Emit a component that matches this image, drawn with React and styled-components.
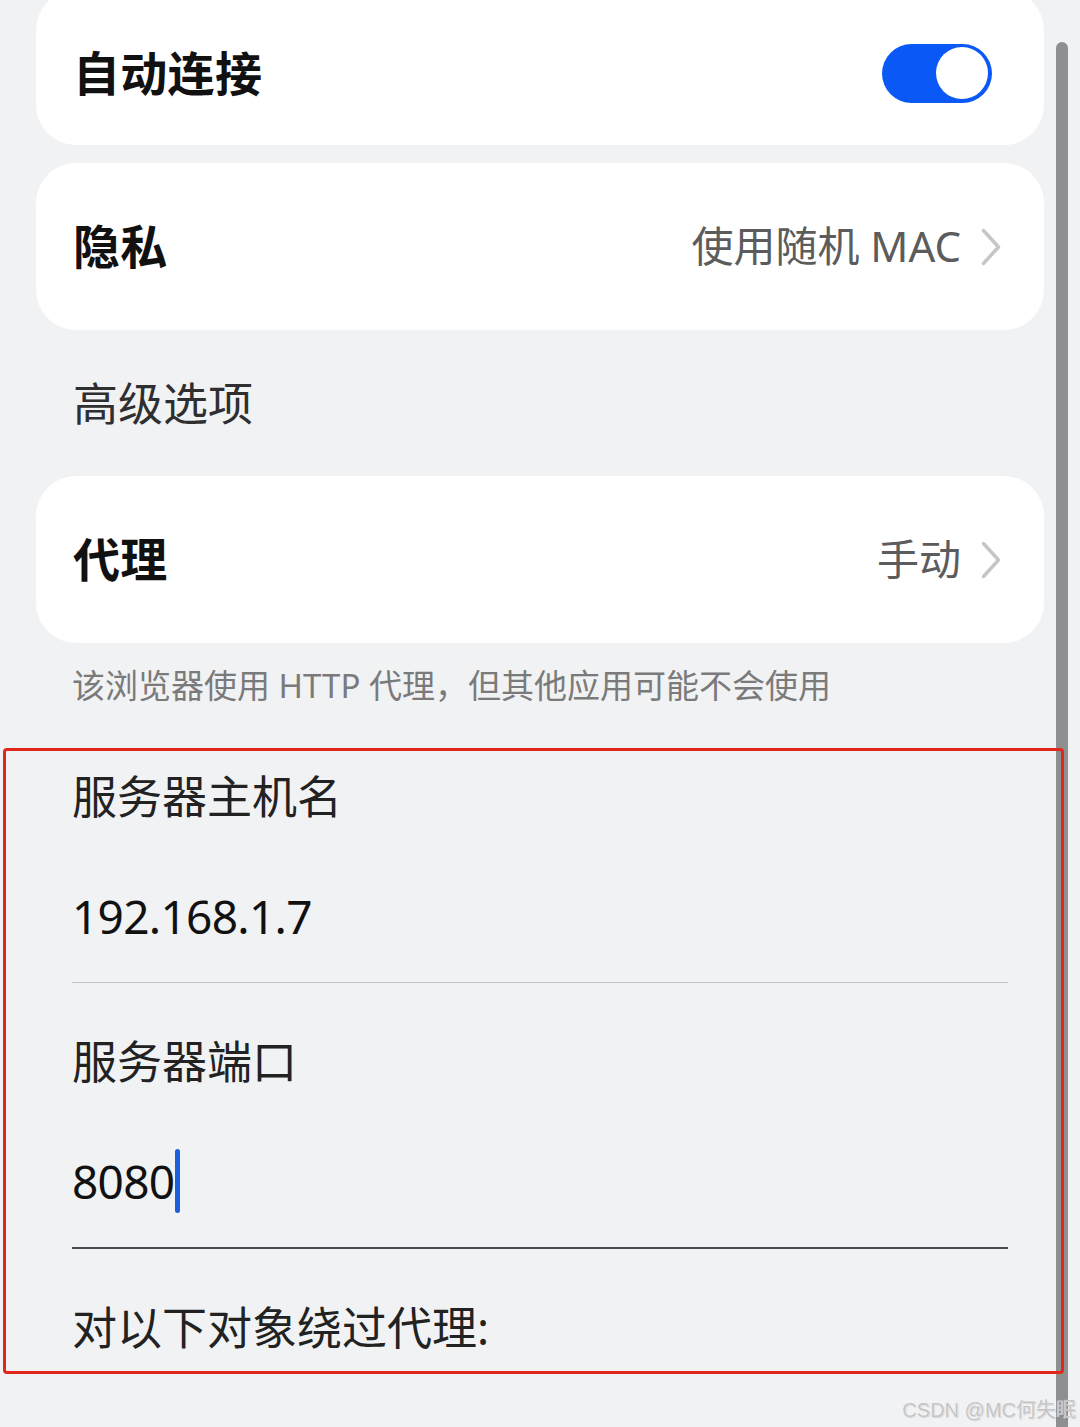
import React from "react";
import styled, { createGlobalStyle } from "styled-components";

const Global = createGlobalStyle`
  html, body {
    margin: 0;
    padding: 0;
    background: #f1f2f4;
  }
  body {
    font-family: "Noto Sans", "Noto Sans CJK SC", sans-serif;
    -webkit-font-smoothing: antialiased;
  }
  * { box-sizing: border-box; }
`;

const Screen = styled.div`
  position: relative;
  width: 1080px;
  height: 1427px;
  overflow: hidden;
  background: #f1f2f4;
  padding: 0 36px;
  display: flex;
  flex-direction: column;
`;

const Card = styled.div`
  background: #ffffff;
  border-radius: 40px;
  height: ${(p) => p.$height || 167}px;
  margin-top: ${(p) => p.$top || 0}px;
  padding: ${(p) => p.$padTop || 0}px ${(p) => p.$padRight || 43}px 6px 37px;
  display: flex;
  align-items: center;
  justify-content: space-between;
`;

const Title = styled.span`
  font-size: 47px;
  font-weight: 700;
  color: #111;
  letter-spacing: 0.3px;
`;

const Trailing = styled.div`
  display: flex;
  align-items: center;
  gap: 20px;
`;

const Value = styled.span`
  font-size: 42px;
  color: #5c5c5c;
`;

const ChevronIcon = styled.svg`
  display: block;
  margin: 3px 0 -3px;
`;

const Switch = styled.div`
  width: 110px;
  height: 59px;
  margin-bottom: -6px;
  border-radius: 30px;
  background: #0a59f7;
  display: flex;
  align-items: center;
  justify-content: flex-end;
  padding-right: 4px;
`;

const Knob = styled.div`
  width: 52px;
  height: 52px;
  border-radius: 50%;
  background: #ffffff;
`;

const GroupHeader = styled.div`
  height: 146px;
  display: flex;
  align-items: center;
  padding: 0 0 4px 37px;
  font-size: 45px;
  color: #2f2f2f;
`;

const Caption = styled.div`
  height: 105px;
  padding: 0 0 24px 36px;
  display: flex;
  align-items: center;
  font-size: 33px;
  color: #7a7a7a;
`;

const Marked = styled.section`
  position: relative;
  z-index: 2;
  margin: 0 -20px 0 -33px;
  border: 3px solid #e2261c;
  border-radius: 4px;
  padding: 6px 53px 3px 66px;
  display: flex;
  flex-direction: column;
`;

const Field = styled.div`
  display: flex;
  flex-direction: column;
  margin-bottom: 39px;
`;

const Label = styled.div`
  height: 80px;
  padding-bottom: 6px;
  display: flex;
  align-items: center;
  font-size: 45px;
  color: #222;
`;

const Input = styled.div`
  margin-top: 17px;
  height: ${(p) => 128 + p.$line}px;
  display: flex;
  align-items: center;
  padding-bottom: 4px;
  border-bottom: ${(p) => p.$line}px solid ${(p) => (p.$line > 1 ? "#4d4d4d" : "#c3c3c5")};
  font-size: 46px;
  letter-spacing: -0.7px;
  color: #111;
`;

const Caret = styled.span`
  display: inline-block;
  width: 5px;
  height: 64px;
  margin-left: 1px;
  border-radius: 3px;
  background: #1b5fdc;
`;

const ScrollThumb = styled.div`
  position: absolute;
  left: 1056px;
  top: 42px;
  bottom: 0;
  width: 12px;
  border-radius: 6px 6px 0 0;
  background: #8e8f91;
  z-index: 1;
`;

const Watermark = styled.div`
  position: absolute;
  right: 4px;
  bottom: 4px;
  z-index: 3;
  font-family: "Liberation Sans", "Noto Sans CJK SC", sans-serif;
  font-size: 20px;
  color: #c4c4c6;
  text-shadow: 0 0 1px #ffffff, 1px 1px 1px rgba(0, 0, 0, 0.12);
`;

const Chevron = () => (
  <ChevronIcon width="20" height="38" viewBox="0 0 20 38" fill="none">
    <polyline
      points="2.5,2.5 17.5,19 2.5,35.5"
      stroke="#c6c6c8"
      strokeWidth="3.5"
      strokeLinecap="round"
      strokeLinejoin="round"
    />
  </ChevronIcon>
);

export default function App() {
  return (
    <>
      <Global />
      <Screen>
        <Card $height={155} $top={-10} $padTop={11} $padRight={52}>
          <Title>自动连接</Title>
          <Switch>
            <Knob />
          </Switch>
        </Card>

        <Card $top={18}>
          <Title>隐私</Title>
          <Trailing>
            <Value>使用随机 MAC</Value>
            <Chevron />
          </Trailing>
        </Card>

        <GroupHeader>高级选项</GroupHeader>

        <Card>
          <Title>代理</Title>
          <Trailing>
            <Value>手动</Value>
            <Chevron />
          </Trailing>
        </Card>

        <Caption>该浏览器使用 HTTP 代理，但其他应用可能不会使用</Caption>

        <Marked>
          <Field>
            <Label>服务器主机名</Label>
            <Input $line={1}>192.168.1.7</Input>
          </Field>
          <Field>
            <Label>服务器端口</Label>
            <Input $line={2}>
              8080
              <Caret />
            </Input>
          </Field>
          <Label>对以下对象绕过代理:</Label>
        </Marked>

        <ScrollThumb />
        <Watermark>CSDN @MC何失眠</Watermark>
      </Screen>
    </>
  );
}
